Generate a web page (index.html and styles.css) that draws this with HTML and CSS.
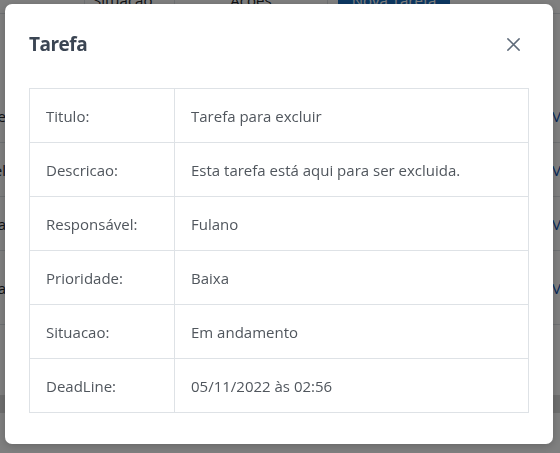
FILE: index.html
```html
<!DOCTYPE html>
<html lang="pt-BR">
<head>
<meta charset="utf-8">
<title>Tarefa</title>
<link rel="stylesheet" href="styles.css">
</head>
<body>
<div class="page">
  <div class="page-head">
    <div class="ph-cell c1"></div>
    <div class="ph-cell c2">Situação</div>
    <div class="ph-cell c3">Ações</div>
    <div class="ph-btn">Nova Tarefa</div>
  </div>
  <div class="page-row first"><span class="pr-left">Tarefa de teste</span><span class="pr-right">Ver</span></div>
  <div class="page-row"><span class="pr-left">Responsável</span><span class="pr-right">Ver</span></div>
  <div class="page-row"><span class="pr-left">Alta</span><span class="pr-right">Ver</span></div>
  <div class="page-row tall"><span class="pr-left">Baixa</span><span class="pr-right">Ver</span></div>
  <div class="page-gap"></div>
  <div class="page-band"></div>
</div>
<div class="backdrop"></div>
<div class="modal">
  <div class="modal-header">
    <h5 class="modal-title">Tarefa</h5>
    <button class="close-btn" type="button" aria-label="Fechar">
      <svg width="15" height="15" viewBox="0 0 16 16"><path d="M2 2L14 14M14 2L2 14" stroke="#5f6b7a" stroke-width="1.6" fill="none" stroke-linecap="round"/></svg>
    </button>
  </div>
  <div class="modal-body">
    <table class="info">
      <tr><td class="lbl">Titulo:</td><td>Tarefa para excluir</td></tr>
      <tr><td class="lbl">Descricao:</td><td>Esta tarefa está aqui para ser excluida.</td></tr>
      <tr><td class="lbl">Responsável:</td><td>Fulano</td></tr>
      <tr><td class="lbl">Prioridade:</td><td>Baixa</td></tr>
      <tr><td class="lbl">Situacao:</td><td>Em andamento</td></tr>
      <tr><td class="lbl">DeadLine:</td><td>05/11/2022 às 02:56</td></tr>
    </table>
  </div>
</div>
</body>
</html>
```
FILE: styles.css
```css
html, body {
  margin: 0;
  padding: 0;
  background: #fff;
  font-family: "Open Sans", "Noto Sans", sans-serif;
  overflow: hidden;
}
.page {
  width: 560px;
  height: 453px;
  display: flex;
  flex-direction: column;
  color: #212529;
}
.page-head {
  display: flex;
  height: 25px;
  border-bottom: 1px solid #dee2e6;
  margin-top: -12px;
  font-size: 15px;
}
.ph-cell {
  border-right: 1px solid #dee2e6;
  padding: 0 8px;
  line-height: 24px;
}
.c1 { width: 68px; }
.c2 { width: 73px; }
.c3 { width: 136px; text-align: center; }
.ph-btn {
  margin-left: 10px;
  width: 112px;
  background: #1a70c4;
  color: #fff;
  text-align: center;
  line-height: 24px;
}
.page-row {
  height: 53px;
  flex: none;
  border-bottom: 1px solid #dee2e6;
  display: flex;
  justify-content: space-between;
  align-items: center;
  font-size: 15px;
}
.page-row.first { height: 128px; align-items: flex-end; }
.page-row.first .pr-left,
.page-row.first .pr-right { margin-bottom: 16px; }
.page-row.tall { height: 73px; }
.pr-left { margin-left: -100px; width: 106px; text-align: right; }
.pr-right { color: #0d4fb0; margin-right: -14px; width: 22px; }
.page-gap { height: 70px; flex: none; }
.page-band { height: 18px; flex: none; background: #ddd; }
.backdrop {
  position: fixed;
  inset: 0;
  background: rgba(0, 0, 0, 0.5);
}
.modal {
  position: fixed;
  left: 5px;
  top: 4px;
  width: 548px;
  height: 440px;
  background: #fff;
  border-radius: 7px;
  box-shadow: 0 2px 8px rgba(0, 0, 0, 0.2);
  display: flex;
  flex-direction: column;
}
.modal-header {
  display: flex;
  justify-content: space-between;
  align-items: center;
  padding: 24px 24px 0 24px;
}
.modal-title {
  margin: 0;
  font-size: 19px;
  letter-spacing: -0.5px;
  line-height: 32px;
  font-weight: 700;
  color: #3b4553;
}
.close-btn {
  width: 32px;
  height: 32px;
  padding: 0;
  border: 0;
  background: transparent;
  display: flex;
  align-items: center;
  justify-content: center;
}
.modal-body {
  padding: 28px 24px 0 24px;
}
.info {
  width: 500px;
  border-collapse: collapse;
  font-size: 15px;
  color: #50565d;
}
.info td {
  border: 1px solid #dee2e6;
  height: 54px;
  padding: 0 16px;
  box-sizing: border-box;
  vertical-align: middle;
}
.info td.lbl { width: 145px; }
```
